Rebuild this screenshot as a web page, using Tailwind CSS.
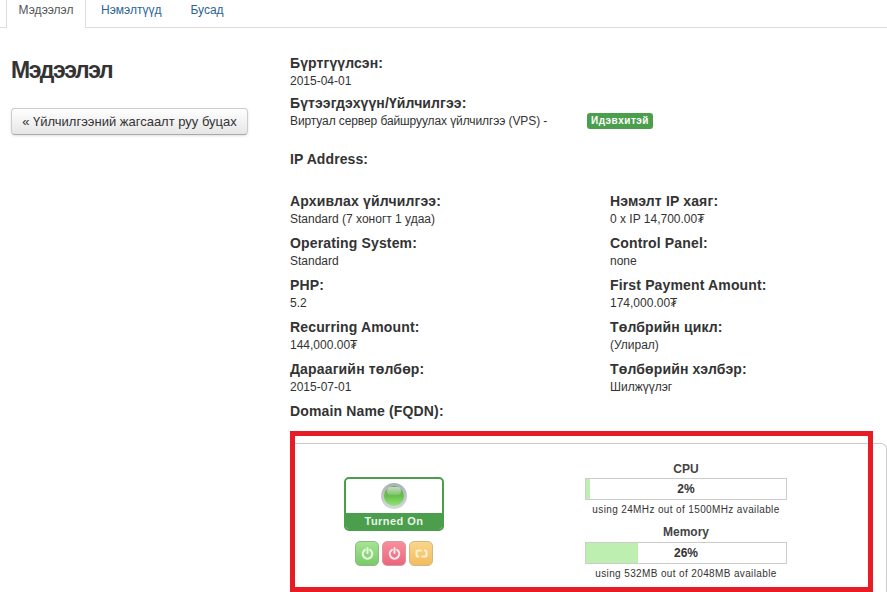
<!DOCTYPE html>
<html lang="en">
<head>
    <meta charset="UTF-8">
    <title>Мэдээлэл</title>
    <script src="https://cdn.jsdelivr.net/npm/@tailwindcss/browser@4"></script>
</head>
<body class="bg-white text-[#333] font-['Liberation_Sans',Arial,sans-serif] w-[887px] h-[592px] overflow-hidden relative">

    <!-- tabs -->
    <div class="flex h-[28px] border-b border-[#ddd] pl-[6px] text-[12px] leading-[20px]">
        <div class="h-[28px] w-[80px] bg-white border-x border-[#ddd] text-[#555] text-center">Мэдээлэл</div>
        <div class="px-[15px] text-[#2a6496]">Нэмэлтүүд</div>
        <div class="px-[14px] text-[#2a6496]">Бусад</div>
    </div>

    <div class="flex">
        <!-- left column -->
        <div class="w-[290px] pl-[11px] pt-[28px] shrink-0">
            <h1 class="text-[23px] leading-[28px] font-bold text-[#333] tracking-[-1.4px]">Мэдээлэл</h1>
            <button class="mt-[24px] w-[237px] h-[27px] rounded-[4px] border border-[#ccc] border-b-[#aaa] bg-linear-to-b from-white to-[#e6e6e6] text-[13px] text-[#333] shadow-sm">« Үйлчилгээний жагсаалт руу буцах</button>
        </div>

        <!-- details -->
        <div class="w-[597px] pt-[25px]">
            <div class="h-[40px]">
                <div class="text-[14px] leading-[20px] font-bold tracking-[0.1px]">Бүртгүүлсэн:</div>
                <div class="text-[12px] leading-[16px]">2015-04-01</div>
            </div>
            <div class="h-[56px]">
                <div class="text-[14px] leading-[20px] font-bold tracking-[0.1px]">Бүтээгдэхүүн/Үйлчилгээ:</div>
                <div class="flex text-[12px] leading-[16px]">
                    <span class="w-[297px] tracking-[-0.1px]">Виртуал сервер байшруулах үйлчилгээ (VPS) -</span>
                    <span class="h-[16px] px-[4px] rounded-[3px] bg-[#4a9e4c] text-white text-[10px] font-bold leading-[16px] tracking-[0.5px]">Идэвхитэй</span>
                </div>
            </div>
            <div class="h-[42px] text-[14px] leading-[20px] font-bold tracking-[0.1px]">IP Address:</div>

            <div class="grid grid-cols-[320px_1fr] auto-rows-[42px]">
                <div><div class="text-[14px] leading-[20px] font-bold tracking-[0.15px]">Архивлах үйлчилгээ:</div><div class="text-[12px] leading-[16px]">Standard (7 хоногт 1 удаа)</div></div>
                <div><div class="text-[14px] leading-[20px] font-bold tracking-[0.15px]">Нэмэлт IP хаяг:</div><div class="text-[12px] leading-[16px]">0 x IP 14,700.00₮</div></div>
                <div><div class="text-[14px] leading-[20px] font-bold tracking-[0.15px]">Operating System:</div><div class="text-[12px] leading-[16px]">Standard</div></div>
                <div><div class="text-[14px] leading-[20px] font-bold tracking-[0.15px]">Control Panel:</div><div class="text-[12px] leading-[16px]">none</div></div>
                <div><div class="text-[14px] leading-[20px] font-bold tracking-[0.15px]">PHP:</div><div class="text-[12px] leading-[16px]">5.2</div></div>
                <div><div class="text-[14px] leading-[20px] font-bold tracking-[0.15px]">First Payment Amount:</div><div class="text-[12px] leading-[16px]">174,000.00₮</div></div>
                <div><div class="text-[14px] leading-[20px] font-bold tracking-[0.15px]">Recurring Amount:</div><div class="text-[12px] leading-[16px]">144,000.00₮</div></div>
                <div><div class="text-[14px] leading-[20px] font-bold tracking-[0.15px]">Төлбрийн цикл:</div><div class="text-[12px] leading-[16px]">(Улирал)</div></div>
                <div><div class="text-[14px] leading-[20px] font-bold tracking-[0.15px]">Дараагийн төлбөр:</div><div class="text-[12px] leading-[16px]">2015-07-01</div></div>
                <div><div class="text-[14px] leading-[20px] font-bold tracking-[0.15px]">Төлбөрийн хэлбэр:</div><div class="text-[12px] leading-[16px]">Шилжүүлэг</div></div>
                <div><div class="text-[14px] leading-[20px] font-bold tracking-[0.15px]">Domain Name (FQDN):</div></div>
            </div>

            <!-- server panel -->
            <div class="h-[160px] border-t border-r border-[#ccc] rounded-tr-[6px] flex">
                <div class="w-[295px] pt-[33px] pr-[87px] flex flex-col items-center shrink-0">
                    <div class="w-[100px] h-[54px] border-[2px] border-[#4a9e4c] rounded-[5px] overflow-hidden flex flex-col">
                        <div class="flex-1 flex items-center justify-center">
                            <div class="w-[26px] h-[26px] rounded-full bg-linear-to-b from-[#a9b0b4] to-[#d5dadc] flex items-center justify-center">
                                <div class="relative w-[20px] h-[20px] rounded-full bg-linear-to-b from-[#6ea860] via-[#66bf4c] to-[#95e476]">
                                    <div class="absolute left-[3px] top-[1px] w-[14px] h-[8px] rounded-full bg-linear-to-b from-white/60 to-white/15"></div>
                                </div>
                            </div>
                        </div>
                        <div class="h-[16px] bg-[#4a9e4c] text-[#e8f5e8] text-[11px] font-bold leading-[16px] text-center tracking-[0.45px]">Turned On</div>
                    </div>
                    <div class="flex gap-[3px] mt-[10px]">
                        <div class="w-[24px] h-[25px] rounded-[5px] border border-[#8fb888] bg-linear-to-b from-[#a6e492] to-[#78cb68] flex items-center justify-center">
                            <svg width="13" height="13" viewBox="0 0 13 13" fill="none" stroke="#eafae2" stroke-width="2" stroke-linecap="round"><path d="M3.900 2.800a4.800 4.800 0 1 0 5.200 0"/><path d="M6.500 1v5"/></svg>
                        </div>
                        <div class="w-[24px] h-[25px] rounded-[5px] border border-[#d59aa0] bg-linear-to-b from-[#f78f9d] to-[#ec647b] flex items-center justify-center">
                            <svg width="13" height="13" viewBox="0 0 13 13" fill="none" stroke="#feeaed" stroke-width="2" stroke-linecap="round"><path d="M3.900 2.800a4.800 4.800 0 1 0 5.200 0"/><path d="M6.500 1v5"/></svg>
                        </div>
                        <div class="w-[24px] h-[25px] rounded-[5px] border border-[#cfb98a] bg-linear-to-b from-[#fad688] to-[#f4bc5f] flex items-center justify-center">
                            <svg width="13" height="13" viewBox="0 0 13 13" fill="none" stroke="#fdf3d2" stroke-width="2"><path d="M5 3.500H3a1.500 1.500 0 0 0-1.500 1.500v3A1.500 1.500 0 0 0 3 9.500h1"/><path d="M8 9.500h2a1.500 1.500 0 0 0 1.500-1.500V5A1.500 1.500 0 0 0 10 3.500H9"/><path d="M6.500 2v3l-2-1.500zM6.500 8v3l2-1.500z" fill="#fdf3d2" stroke="none"/></svg>
                        </div>
                    </div>
                </div>
                <div class="w-[202px] pt-[17px] text-center">
                    <div class="text-[12px] leading-[16px] font-bold text-[#444]">CPU</div>
                    <div class="relative h-[22px] border border-[#ccc] mt-[1px]">
                        <div class="h-full bg-[#bdf0b0] w-[2%]"></div>
                        <div class="absolute inset-0 text-[12px] leading-[20px] font-bold">2%</div>
                    </div>
                    <div class="text-[10px] leading-[16px] mt-[2px] tracking-[0.37px] whitespace-nowrap">using 24MHz out of 1500MHz available</div>
                    <div class="text-[12px] leading-[16px] font-bold text-[#444] mt-[6px]">Memory</div>
                    <div class="relative h-[22px] border border-[#ccc] mt-[2px]">
                        <div class="h-full bg-[#bdf0b0] w-[26%]"></div>
                        <div class="absolute inset-0 text-[12px] leading-[20px] font-bold">26%</div>
                    </div>
                    <div class="text-[10px] leading-[16px] mt-[2px] tracking-[0.37px] whitespace-nowrap">using 532MB out of 2048MB available</div>
                </div>
            </div>
        </div>
    </div>

    <!-- red annotation drawn over the screenshot -->
    <div class="absolute left-[290px] top-[431px] w-[583px] h-[161px] border-[5px] border-[#e81c24] pointer-events-none"></div>
</body>
</html>
